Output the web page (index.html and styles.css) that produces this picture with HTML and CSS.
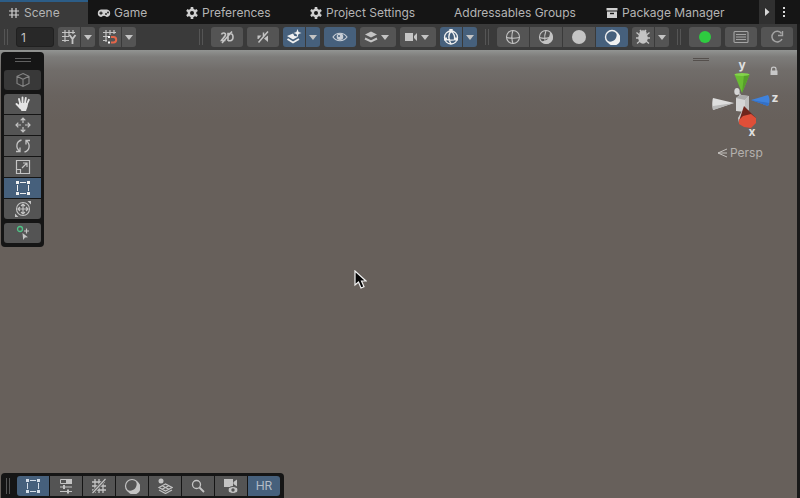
FILE: index.html
```html
<!DOCTYPE html>
<html lang="en">
<head>
<meta charset="utf-8">
<title>Scene</title>
<link rel="stylesheet" href="styles.css">
</head>
<body>
<div class="editor">
  <nav class="tabs">
    <a class="tab active" href="#scene"><svg class="tab-icon" viewBox="0 0 12 12"><path d="M4 1v10M8 1v10M1 4h10M1 8h10" fill="none" stroke="currentColor" stroke-width="1.200"/></svg>Scene</a>
    <a class="tab tight" href="#game"><svg class="tab-icon pad" viewBox="0 0 14 12"><path d="M4 2.500h6a3.800 3.800 0 0 1 0 7.500c-1.200 0-1.500-1.200-3-1.200S5.200 10 4 10a3.800 3.800 0 0 1 0-7.500z" fill="currentColor"/><path d="M4 4.500v3.200M2.400 6.100h3.200" stroke="#191919" stroke-width="1.100"/><circle cx="9" cy="7" r=".9" fill="#191919"/><circle cx="11" cy="5.500" r=".9" fill="#191919"/></svg>Game</a>
    <a class="tab" href="#preferences"><svg class="tab-icon" viewBox="0 0 12 12"><circle cx="6" cy="6" r="3.200" fill="none" stroke="currentColor" stroke-width="2.400"/><path d="M6 0v2.500M6 9.500V12M.8 3l2.200 1.300M9 7.700 11.200 9M.8 9 3 7.700M9 4.300 11.200 3" stroke="currentColor" stroke-width="2.600"/></svg>Preferences</a>
    <a class="tab" href="#project"><svg class="tab-icon" viewBox="0 0 12 12"><circle cx="6" cy="6" r="3.200" fill="none" stroke="currentColor" stroke-width="2.400"/><path d="M6 0v2.500M6 9.500V12M.8 3l2.200 1.300M9 7.700 11.200 9M.8 9 3 7.700M9 4.300 11.200 3" stroke="currentColor" stroke-width="2.600"/></svg>Project Settings</a>
    <a class="tab" href="#addressables">Addressables Groups</a>
    <a class="tab" href="#packages"><svg class="tab-icon" viewBox="0 0 12 12"><path d="M.5 1h11v2.500H.5zM1 4.500h10V11H1z" fill="currentColor"/><path d="M4 6.500h4" stroke="#191919" stroke-width="1.400"/></svg>Package Manager</a>
    <button class="tab-scroll" aria-label="Scroll tabs"><svg width="16" height="16" viewBox="0 0 16 16"><path d="M6 4v8l4.500-4z" fill="currentColor"/></svg></button>
    <button class="tab-menu" aria-label="Menu"><svg width="16" height="16" viewBox="0 0 16 16"><path d="M7 3h2v2H7zM7 7h2v2H7zM7 11h2v2H7z" fill="currentColor"/></svg></button>
  </nav>

  <header class="toolbar">
    <span class="grip"></span>
    <input class="number" type="text" value="1" aria-label="Grid size">
    <div class="group">
      <button class="btn split" aria-label="Grid axis"><svg viewBox="0 0 16 16"><path d="M4 1v12M8 1v6M12 1v4M1 3.500h13M1 7.500h7M1 11.500h7" fill="none" stroke="currentColor" stroke-width="1.200"/><path d="m8.500 6 3 4 3-4M11.500 10v5" fill="none" stroke="currentColor" stroke-width="1.800"/></svg></button>
      <button class="btn caret" aria-label="Grid options"></button>
    </div>
    <div class="group">
      <button class="btn split" aria-label="Snapping"><svg viewBox="0 0 16 16"><path d="M4 1v12M8 1v5M12 1v4M1 3.500h13M1 7.500h5M1 11.500h4" fill="none" stroke="currentColor" stroke-width="1.200"/><path d="M9 8h2.500a2.700 2.700 0 0 1 0 5.400H9" fill="none" stroke="#e4664a" stroke-width="2"/><path d="M6 7h2v2H6zM6 12.500h2v2H6z" fill="#fff"/></svg></button>
      <button class="btn caret" aria-label="Snapping options"></button>
    </div>
    <span class="grip push"></span>
    <button class="btn" aria-label="2D view"><svg viewBox="0 0 16 16"><path d="M2.500 5.500C3 3.500 7 3.500 6.500 6c-.3 1.500-2.500 3-4 5.500h4M9 12V4.500h2c4 0 4 7.200 0 7.200H9M3 14 13 2.500" fill="none" stroke="currentColor" stroke-width="1.600"/></svg></button>
    <button class="btn" aria-label="Scene audio"><svg viewBox="0 0 16 16"><path d="M2.500 6.500h4l-3 3.500h-1z" fill="currentColor"/><path d="M13 6.500V13l-4-3.500z" fill="currentColor"/><path d="m3.500 13.500 9.500-11M8.500 3.500v4" fill="none" stroke="currentColor" stroke-width="1.500"/></svg></button>
    <div class="group">
      <button class="btn split on" aria-label="Effects"><svg viewBox="0 0 16 16"><path d="m1 7 6-2.500 1.500 2.500 4 .5L7 10.500z" fill="currentColor"/><path d="m1.500 10 5.500 3.500 6-3.500" fill="none" stroke="currentColor" stroke-width="1.900"/><path d="m11.500 0 1.100 2.900 2.900 1.100-2.900 1.100L11.500 8l-1.100-2.900L7.500 4l2.900-1.100z" fill="currentColor"/></svg></button>
      <button class="btn caret on" aria-label="Effects options"></button>
    </div>
    <button class="btn on soft" aria-label="Scene visibility"><svg viewBox="0 0 16 16"><path d="M1 8c3.500-5 10.500-5 14 0-3.500 5-10.500 5-14 0z" fill="none" stroke="currentColor" stroke-width="1.200"/><circle cx="8" cy="7.800" r="3.300" fill="currentColor"/><circle cx="7" cy="7" r="1" fill="#46607c"/></svg></button>
    <button class="btn wide" aria-label="Layers"><svg viewBox="0 0 16 16"><path d="m2 5.500 6-3 6 3-6 3z" fill="currentColor"/><path d="m2 9.500 6 3 6-3" fill="none" stroke="currentColor" stroke-width="2"/></svg><i class="arrow"></i></button>
    <button class="btn wide" aria-label="Camera"><svg viewBox="0 0 16 16"><path d="M2 4h8v8H2zM11 7l3-3v8l-3-3z" fill="currentColor"/></svg><i class="arrow"></i></button>
    <div class="group">
      <button class="btn split on" aria-label="Gizmos"><svg viewBox="0 0 16 16"><g fill="none" stroke="currentColor" stroke-width="1.300"><circle cx="8" cy="8.500" r="6.500"/><path d="M8 2C5 6 5.500 11 8 15M8 2c4 3 4 6 3.500 9M2 10c4 1.500 8 1.500 12 0"/></g><path d="M6.300 0h3.400v3.400H6.300zM1 8.500h3v3H1zM12 8.500h3v3h-3z" fill="currentColor"/></svg></button>
      <button class="btn caret on" aria-label="Gizmo options"></button>
    </div>
    <span class="grip wide-gap"></span>
    <div class="group">
      <button class="btn" aria-label="Wireframe"><svg viewBox="0 0 16 16"><g fill="none" stroke="currentColor" stroke-width="1.100"><circle cx="8" cy="8" r="6.500"/><path d="M8 1.500C6.500 5 6.500 11 8 14.500M1.500 8.500c4 1 9 1 13 0"/></g></svg></button>
      <button class="btn" aria-label="Shaded wireframe"><svg viewBox="0 0 16 16"><path d="M12 3a6.500 6.500 0 1 1-9 9c3 1 9-1 9-9z" fill="currentColor"/><g fill="none" stroke="currentColor" stroke-width="1.100"><circle cx="8" cy="8" r="6.500"/><path d="M8 1.500C6.500 5 6.500 9 7 12M1.500 8.500c3 1 7 1 10 0"/></g></svg></button>
      <button class="btn" aria-label="Unlit"><svg viewBox="0 0 16 16"><circle cx="8" cy="8" r="7" fill="currentColor"/></svg></button>
      <button class="btn on" aria-label="Shaded"><svg viewBox="0 0 16 16"><circle cx="8" cy="8" r="6.500" fill="none" stroke="currentColor" stroke-width="1.400"/><path d="M12 3a7 7 0 1 1-9 9c3 1.300 6 .6 7.800-1.200S13.300 6 12 3z" fill="currentColor"/></svg></button>
    </div>
    <div class="group">
      <button class="btn split" aria-label="Debug"><svg viewBox="0 0 16 16"><ellipse cx="8" cy="9" rx="4.800" ry="5.800" fill="currentColor"/><path d="M5 4.500C5 1 11 1 11 4.500zM5 1l1.500 2M11 1 9.500 3M1.500 3.500l3 2.500M14.500 3.500l-3 2.500M1 9h14M2 14.500 5 12M14 14.500 11 12" fill="currentColor" stroke="currentColor" stroke-width="1.300"/></svg></button>
      <button class="btn caret" aria-label="Debug options"></button>
    </div>
    <span class="grip wide-gap"></span>
    <button class="btn" aria-label="Status"><svg viewBox="0 0 16 16"><circle cx="8" cy="8" r="6" fill="#2ecc40"/></svg></button>
    <button class="btn dim" aria-label="Console"><svg viewBox="0 0 16 16"><rect x="1" y="2.500" width="14" height="11" rx="1" fill="none" stroke="currentColor" stroke-width="1.100"/><path d="M3 5.500h10M3 8h10M3 10.500h10" stroke="currentColor" stroke-width="1.100"/></svg></button>
    <button class="btn dim" aria-label="Refresh"><svg viewBox="0 0 16 16"><path d="M12.500 4.500A5.300 5.300 0 1 0 13 10" fill="none" stroke="currentColor" stroke-width="1.500"/><path d="M13.500 2v4.500H9" fill="none" stroke="currentColor" stroke-width="1.400"/></svg></button>
  </header>

  <main class="scene">
    <aside class="tools">
      <span class="handle"></span>
      <button class="btn muted" aria-label="Custom editor tool"><svg viewBox="0 0 16 16"><path d="m8 1.500 6 2.800v7.200l-6 3-6-3V4.300zM2 4.300l6 3 6-3M8 7.300v7.200" fill="none" stroke="currentColor" stroke-width="1.100"/></svg></button>
      <div class="stack">
        <button class="btn bright" aria-label="Hand"><svg viewBox="0 0 16 16"><path d="M5.300 8 4 3M7.500 7V1.500M10 7l.8-5M12 8l1.800-4.200M5.500 12 1.500 8" stroke="currentColor" stroke-width="1.900" stroke-linecap="round"/><path d="M4.400 7h8.500c.2 4-1.300 5.500-1.800 8H6.500C6 13.500 4 12 3 10z" fill="currentColor"/></svg></button>
        <button class="btn" aria-label="Move"><svg viewBox="0 0 16 16"><path d="M8 1v5M8 10v5M1 8h5M10 8h5M5.700 3.300 8 1l2.300 2.300M5.700 12.700 8 15l2.300-2.300M3.300 5.700 1 8l2.300 2.300M12.700 5.700 15 8l-2.300 2.300" fill="none" stroke="currentColor" stroke-width="1.200"/></svg></button>
        <button class="btn" aria-label="Rotate"><svg viewBox="0 0 16 16"><path d="M6.500 2C1 3.500.5 10 4.500 13M9.500 14c5.500-1.500 6-8 2-11M1 13.500h4v-4M15 2.500h-4v4" fill="none" stroke="currentColor" stroke-width="1.300"/></svg></button>
        <button class="btn" aria-label="Scale"><svg viewBox="0 0 16 16"><path d="M1.500 1.500h13v13h-13zM1.500 10.500h4v4M7 9l4.500-4.500M8 4h4v4" fill="none" stroke="currentColor" stroke-width="1.200"/></svg></button>
        <button class="btn on" aria-label="Rect"><svg viewBox="0 0 16 16"><path d="M5 2.500h6M5 13.500h6M2.500 5v6M13.500 5v6" stroke="currentColor"/><path d="M1 1h3v3H1zM12 1h3v3h-3zM1 12h3v3H1zM12 12h3v3h-3z" fill="currentColor"/></svg></button>
        <button class="btn" aria-label="Transform"><svg viewBox="0 0 16 16"><circle cx="8" cy="8" r="6.500" fill="none" stroke="currentColor" stroke-width="1.100"/><path d="M8 3v10M3 8h10M6 5l2-2 2 2M6 11l2 2 2-2M5 6 3 8l2 2M11 6l2 2-2 2" fill="none" stroke="currentColor" stroke-width="1.200"/><path d="M12.500 0H16v3.500zM0 12.500V16h3.500z" fill="currentColor"/></svg></button>
      </div>
      <button class="btn" aria-label="Add component tool"><svg viewBox="0 0 16 16"><circle cx="5" cy="4" r="2.500" fill="none" stroke="#4fc487" stroke-width="1.300"/><path d="M11.500 3.500v5M9 6h5" stroke="currentColor" stroke-width="1.200"/><path d="m7.500 8 5.500 4.200-3 .3L8.200 15z" fill="currentColor"/></svg></button>
    </aside>

    <svg class="gizmo" viewBox="0 5 107 115" role="img" aria-label="Orientation">
      <path d="M3 13.500h16M3 15.500h16" stroke="#544f4c"/>
      <text class="axis" x="52" y="24">y</text>
      <text class="axis" x="85" y="57">z</text>
      <text class="axis" x="62" y="91">x</text>
      <path d="M81.500 26v-2c0-2.500 4.500-2.500 4.500 0v2" fill="none" stroke="#c8c8c8" stroke-width="1.200"/><path d="M80.500 25.500h7V30h-7z" fill="#c8c8c8"/>
      <ellipse cx="47" cy="46.500" rx="2.700" ry="3.500" fill="#d6d6d6"/><path d="m49 47 4 5-4 2z" fill="#bbb"/>
      <path d="M44.500 29.500 52 48l7.500-18.500z" fill="#69bd32"/><path d="M54 30l-2 18 7.500-18.500z" fill="#569f2a"/><ellipse cx="52" cy="29.500" rx="7.500" ry="1.500" fill="#84d44b"/>
      <path d="M23 53c-1 3-1 9 0 12l21-7z" fill="#dedede"/><path d="m23 65 21-7-21 3z" fill="#b9b9b9"/>
      <path d="m61 55 17-5c2 3 2 8 0 11z" fill="#3f82dc"/><path d="m61 55 18 3-1 3z" fill="#3470c6"/>
      <path d="m46 53 4-3 9 1v14l-4 2-9-1z" fill="#d5d5d5"/><path d="m46 53 4-3 9 1-4 4z" fill="#ababab"/><path d="m55 55 4-4v14l-4 2z" fill="#bebebe"/>
      <path d="m53 64-5 9 1 5 4-6z" fill="#c9c9c9"/>
      <path d="m54 61-5 15 17-3z" fill="#70251c"/><path d="m49 75 4-4 8-2 5 4v5l-5 5-7-1-5-3z" fill="#df4f38"/>
      <path d="m37 104-9 4 9 4M28 108h9" fill="none" stroke="#c4c1be"/>
      <text class="projection" x="40" y="112">Persp</text>
    </svg>

    <svg class="cursor" viewBox="0 0 14 20"><path d="M2 1v14l3.500-3 2.500 6 3-1.300-2.500-5.700H13z" fill="#050505" stroke="#f2f2f2" stroke-width="1.200"/></svg>

    <footer class="context">
      <span class="grip"></span>
      <div class="group">
        <button class="btn on" aria-label="Rect tools"><svg viewBox="0 0 16 16"><path d="M5 2.500h6M5 13.500h6M2.500 5v6M13.500 5v6" stroke="currentColor"/><path d="M1 1h3v3H1zM12 1h3v3h-3zM1 12h3v3H1zM12 12h3v3h-3z" fill="currentColor"/></svg></button>
        <button class="btn" aria-label="Tool settings"><svg viewBox="0 0 16 16"><path d="M2.500 1.500h11v4h-11z" fill="none" stroke="currentColor"/><path d="M8 1h6v5H8zM5 7h2v4H5zM9 11.500h2v4H9z" fill="currentColor"/><path d="M2 9h12M2 13.500h12" stroke="currentColor" stroke-width="1.200"/></svg></button>
        <button class="btn" aria-label="Grid and snap"><svg viewBox="0 0 16 16"><path d="M4 1v14M8 1v14M12 3v12M1 4h13M1 8h14M1 12h14" stroke="currentColor" stroke-width="1.300"/><path d="M1.500 15 14.500 1" stroke="#545454" stroke-width="3"/><path d="M1.500 15 14.500 1" stroke="currentColor" stroke-width="1.200"/></svg></button>
        <button class="btn" aria-label="Draw modes"><svg viewBox="0 0 16 16"><circle cx="8" cy="8" r="6.500" fill="none" stroke="currentColor" stroke-width="1.200"/><path d="M12 3a7 7 0 1 1-9 9c3 1.300 6 .6 7.800-1.200S13.300 6 12 3z" fill="currentColor"/></svg></button>
        <button class="btn" aria-label="View options"><svg viewBox="0 0 16 16"><circle cx="4" cy="3" r="2.500" fill="currentColor"/><path d="m2 9.500 6.500-3.500L15 9.500 8.500 13zM5.200 7.700l6.600 3.600M11.800 7.700l-6.600 3.600M2 12l6.500 3.500L15 12" fill="none" stroke="currentColor" stroke-width="1.200"/></svg></button>
        <button class="btn" aria-label="Search"><svg viewBox="0 0 16 16"><circle cx="6.500" cy="6.500" r="4" fill="none" stroke="currentColor" stroke-width="1.300"/><path d="m9.500 9.500 4.500 4.500" stroke="currentColor" stroke-width="1.800"/></svg></button>
        <button class="btn" aria-label="Cameras"><svg viewBox="0 0 16 16"><path d="M1 1h9v8H1zM10.500 4 14 1.500v7L10.500 6z" fill="currentColor"/><ellipse cx="10" cy="12" rx="5" ry="3.500" fill="currentColor" stroke="#545454"/><circle cx="10" cy="12" r="1.700" fill="#545454"/></svg></button>
        <button class="btn on label">HR</button>
      </div>
    </footer>
  </main>
</div>
</body>
</html>
```
FILE: styles.css
```css
* { box-sizing: border-box; }

body {
  margin: 0;
  background: #191919;
  color: #c4c4c4;
  font: 12px/16px Inter, "Liberation Sans", sans-serif;
}

.editor {
  display: flex;
  flex-direction: column;
  min-height: 100vh;
}

button {
  border: 0;
  margin: 0;
  padding: 0;
  color: inherit;
  font: inherit;
  display: flex;
  align-items: center;
  justify-content: center;
}

/* Window tabs */
.tabs {
  display: grid;
  grid-template-columns: 88px 89px 124px 144px 152px 1fr 16px 25px;
  height: 24px;
  background: #151515;
}

.tab {
  display: flex;
  align-items: center;
  gap: 4px;
  padding: 2px 0 0 9px;
  color: #b4b4b4;
  text-decoration: none;
  white-space: nowrap;
}

.tab.tight { gap: 3px; }

.tab.active {
  background: #3a3a3a;
  border-top: 2px solid #2c5d87;
  padding: 0 0 0 8px;
}

.tab-icon {
  width: 12px;
  height: 12px;
  color: #d0d0d0;
  flex: none;
}

.tab-icon.pad { width: 14px; }

.tab-scroll { background: #303030; color: #d8d8d8; }

.tab-menu {
  background: none;
  color: #d8d8d8;
  padding-right: 7px;
}

/* Toolbar */
.toolbar {
  display: flex;
  align-items: center;
  gap: 4px;
  height: 26px;
  padding: 0 4px;
  background: #3a3a3a;
  border-right: 3px solid #191919;
}

.grip {
  width: 4px;
  height: 16px;
  border: solid #555;
  border-width: 0 1px;
}

.toolbar > .grip:first-child { margin-right: 4px; }
.grip.push { margin: 0 4px 0 auto; }
.grip.wide-gap { margin: 0 4px; }

.number {
  width: 38px;
  height: 20px;
  padding: 0 4px;
  border: 1px solid #202020;
  border-radius: 3px;
  background: #282828;
  color: #c4c4c4;
  font: inherit;
}

.group { display: flex; gap: 1px; }

.btn {
  width: 32px;
  height: 20px;
  background: #545454;
  color: #c4c4c4;
}

.btn svg { width: 16px; height: 16px; }
.toolbar > .btn { border-radius: 3px; }
.group .btn:first-child { border-radius: 3px 0 0 3px; }
.group .btn:last-child { border-radius: 0 3px 3px 0; }
.btn.split { width: 22px; }
.btn.caret { width: 14px; }
.btn.wide { width: 36px; gap: 2px; padding-right: 4px; }
.btn.dim { color: #a4a4a4; }
.btn.bright { color: #e4e4e4; }
.btn.on { background: #46607c; color: #f0f0f0; }
.btn.on.soft { color: #c8ced6; }

.arrow,
.caret::before {
  content: "";
  border: solid transparent;
  border-width: 5px 4px 0;
  border-top-color: #c4c4c4;
}

/* Scene view */
.scene {
  position: relative;
  flex: 1;
  overflow: hidden;
  border-right: 3px solid #191919;
  background: linear-gradient(#929492 0, #7d7c7a 7px, #716d6a 20px, #69635f 45px, #67605b 70px);
}

.tools {
  position: absolute;
  top: 2px;
  left: 1px;
  display: flex;
  flex-direction: column;
  gap: 4px;
  width: 43px;
  padding: 6px 3px 4px;
  border-radius: 4px;
  background: #151515;
}

.tools .btn { width: 100%; border-radius: 3px; }
.tools .btn.muted { background: #383838; color: #858585; margin-top: 4px; }
.stack { display: flex; flex-direction: column; gap: 1px; }
.tools .stack .btn { border-radius: 0; }
.tools .stack .btn:first-child { border-radius: 3px 3px 0 0; }
.tools .stack .btn:last-child { border-radius: 0 0 3px 3px; }

.handle {
  align-self: center;
  width: 16px;
  height: 4px;
  border: solid #606060;
  border-width: 1px 0;
}

.gizmo {
  position: absolute;
  top: 0;
  right: 0;
  width: 107px;
  height: 115px;
}

.axis {
  fill: #e0e0e0;
  font-size: 12px;
  font-weight: 700;
  text-anchor: middle;
}

.projection { fill: #b4b0ad; font-size: 12px; }

.cursor {
  position: absolute;
  top: 220px;
  left: 353px;
  width: 14px;
  height: 20px;
}

.context {
  position: absolute;
  bottom: 0;
  left: 1px;
  display: flex;
  align-items: center;
  gap: 7px;
  padding: 3px 4px 2px 5px;
  border-radius: 4px 4px 0 0;
  background: #151515;
}

.context .btn.on { color: #d4dde8; }
.context .btn.label { color: #b4bcc6; }
```
